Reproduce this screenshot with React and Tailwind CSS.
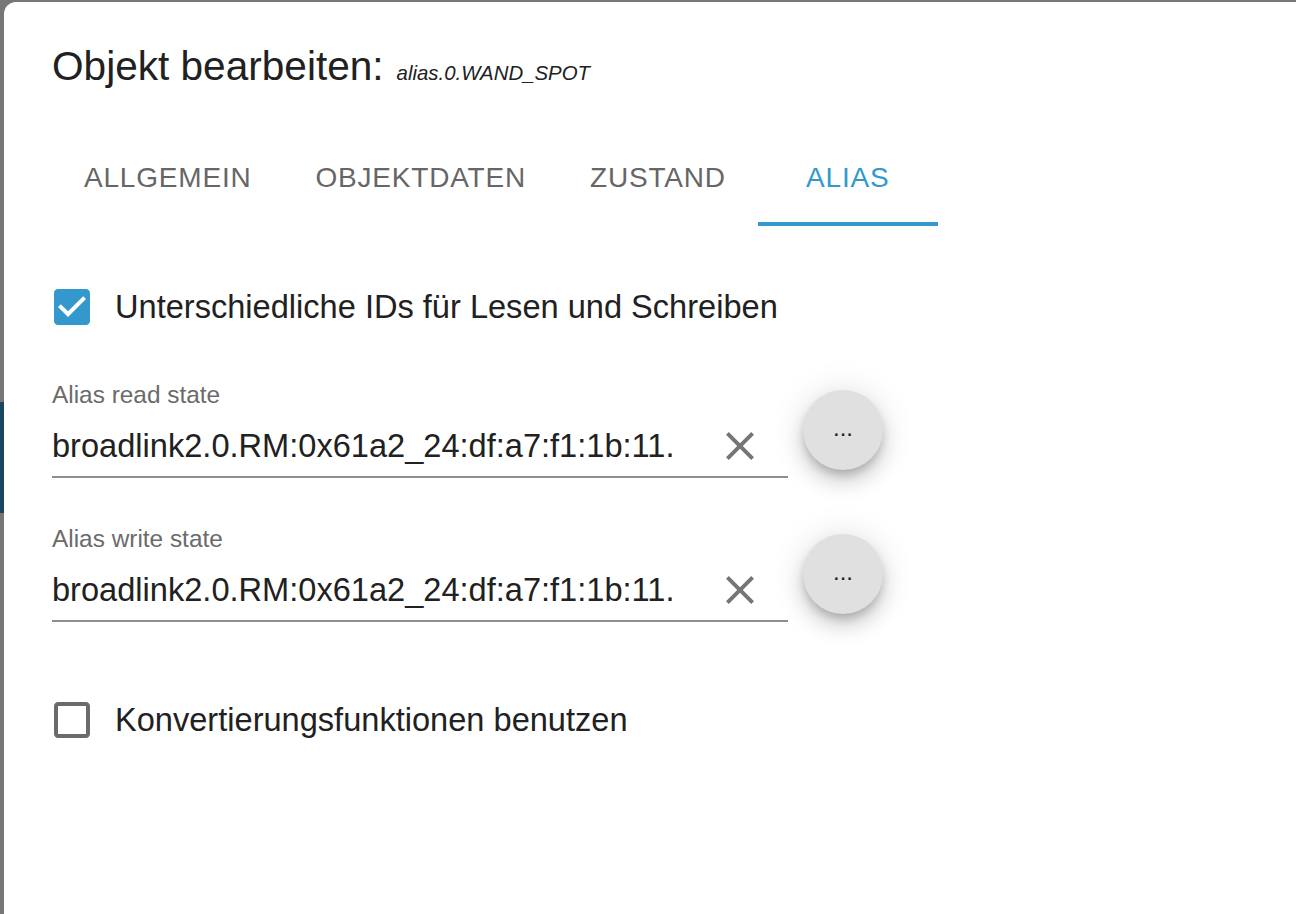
import React, { useState } from "react";

const BLUE = "#3399cc";

const CheckboxIcon = ({ checked }) =>
  checked ? (
    <svg viewBox="0 0 24 24" className="w-[48px] h-[48px] shrink-0" fill={BLUE}>
      <path d="M19 3H5c-1.11 0-2 .9-2 2v14c0 1.1.89 2 2 2h14c1.11 0 2-.9 2-2V5c0-1.1-.89-2-2-2zm-9 14l-5-5 1.41-1.41L10 14.17l7.59-7.59L19 8l-9 9z" />
    </svg>
  ) : (
    <svg viewBox="0 0 24 24" className="w-[48px] h-[48px] shrink-0" fill="#6b6b6b">
      <path d="M19 5v14H5V5h14m0-2H5c-1.1 0-2 .9-2 2v14c0 1.1.9 2 2 2h14c1.1 0 2-.9 2-2V5c0-1.1-.9-2-2-2z" />
    </svg>
  );

const ClearIcon = () => (
  <svg viewBox="0 0 24 24" className="w-[48px] h-[48px] shrink-0" fill="#757575">
    <path d="M19 6.41L17.59 5 12 10.59 6.41 5 5 6.41 10.59 12 5 17.59 6.41 19 12 13.41 17.59 19 19 17.59 13.41 12z" />
  </svg>
);

const StateField = ({ label, value, className }) => (
  <div className={`flex items-start ${className}`}>
    <div className="w-[736px]">
      <div className="h-[28px] leading-[28px] text-[24.4px] text-[#6b6b6b]">{label}</div>
      <div className="flex items-center pt-[17px] pb-[10px] border-b-2 border-[#8f8f8f]">
        <div className="flex-1 h-[40px] leading-[40px] text-[32.6px] text-[#212121] whitespace-nowrap overflow-hidden">
          {value}
        </div>
        <button className="mr-[24px] w-[48px] h-[40px] flex items-center justify-center">
          <ClearIcon />
        </button>
      </div>
    </div>
    <button className="ml-[15px] mt-[9px] w-[80px] h-[80px] rounded-full bg-[#e0e0e0] text-[24px] leading-none text-[#212121] flex items-center justify-center pb-[4px] shadow-[0_6px_10px_-2px_rgba(0,0,0,0.2),0_12px_20px_0_rgba(0,0,0,0.14),0_2px_36px_0_rgba(0,0,0,0.12)]">
      ...
    </button>
  </div>
);

export default function App() {
  const [tab, setTab] = useState(3);
  const [diffIds, setDiffIds] = useState(true);
  const [convert, setConvert] = useState(false);
  const tabs = ["ALLGEMEIN", "OBJEKTDATEN", "ZUSTAND", "ALIAS"];
  const value = "broadlink2.0.RM:0x61a2_24:df:a7:f1:1b:11.";

  return (
    <div
      className="flex w-full h-[914px] overflow-hidden bg-[#777777]"
      style={{ fontFamily: '"Liberation Sans", Arial, sans-serif' }}
    >
      {/* backdrop strip */}
      <div className="w-[4px] flex flex-col shrink-0">
        <div className="h-[402px] bg-[#777777]" />
        <div className="h-[111px] bg-[#1b4660]" />
        <div className="flex-1 bg-[#777777]" />
      </div>

      <div className="flex-1 flex flex-col pt-[2px]">
        <div className="flex-1 bg-white rounded-tl-[12px] pl-[48px] pt-[32px] flex flex-col">
          {/* title */}
          <div className="h-[64px] flex items-baseline leading-[64px] text-[#212121]">
            <span className="text-[40.6px]">Objekt bearbeiten:</span>
            <span className="ml-[13px] text-[20.4px] italic">alias.0.WAND_SPOT</span>
          </div>

          {/* tabs */}
          <div className="mt-[32px] h-[96px] flex">
            {tabs.map((t, i) => (
              <button
                key={t}
                onClick={() => setTab(i)}
                className={`relative h-[96px] px-[32px] text-[28px] tracking-[0.8px] uppercase ${
                  i === 3 ? "min-w-[180px]" : ""
                } ${tab === i ? "text-[#3399cc]" : "text-[#666666]"}`}
              >
                {t}
                {tab === i && (
                  <span className="absolute left-0 right-0 bottom-0 h-[4px] bg-[#3399cc]" />
                )}
              </button>
            ))}
          </div>

          {/* checkbox 1 */}
          <label
            className="mt-[57px] h-[48px] flex items-center ml-[-4px] cursor-pointer"
            onClick={() => setDiffIds(!diffIds)}
          >
            <CheckboxIcon checked={diffIds} />
            <span className="ml-[19px] text-[32.6px] text-[#212121]">
              Unterschiedliche IDs für Lesen und Schreiben
            </span>
          </label>

          <StateField className="mt-[50px]" label="Alias read state" value={value} />
          <StateField className="mt-[47px]" label="Alias write state" value={value} />

          {/* checkbox 2 */}
          <label
            className="mt-[74px] h-[48px] flex items-center ml-[-4px] cursor-pointer"
            onClick={() => setConvert(!convert)}
          >
            <CheckboxIcon checked={convert} />
            <span className="ml-[19px] text-[32.6px] text-[#212121]">
              Konvertierungsfunktionen benutzen
            </span>
          </label>
        </div>
      </div>
    </div>
  );
}
